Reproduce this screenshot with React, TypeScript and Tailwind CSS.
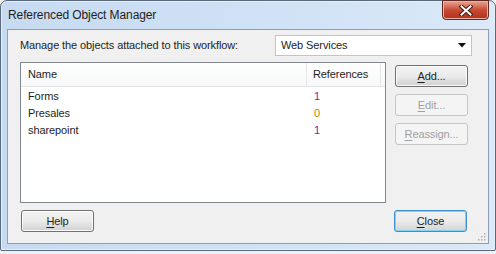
import React from "react";

function Btn({ mnemonic, rest, disabled, focused, className = "" }: { mnemonic: string; rest: string; disabled?: boolean; focused?: boolean; className?: string }) {
  const base = disabled
    ? "border-[#c5c5c5] bg-[#f4f4f4] text-[#a0a0a0]"
    : focused
    ? "border-[#3c8fc8] bg-gradient-to-b from-[#f2f2f2] via-[#ebebeb] to-[#d4d4d4] text-[#1e1e1e] shadow-[inset_0_0_0_1px_#7fd4f5]"
    : "border-[#707070] bg-gradient-to-b from-[#f2f2f2] via-[#ebebeb] to-[#d0d0d0] text-[#1e1e1e] shadow-[inset_0_0_0_1px_#fcfcfc]";
  return (
    <div className={`flex h-[22px] w-[73px] items-center justify-center rounded-[3px] border ${base} ${className}`}>
      <span>
        <span className="underline underline-offset-2">{mnemonic}</span>
        {rest}
      </span>
    </div>
  );
}

const rows = [
  { name: "Forms", refs: "1", color: "text-[#9a139a]" },
  { name: "Presales", refs: "0", color: "text-[#b48600]" },
  { name: "sharepoint", refs: "1", color: "text-[#9a139a]" },
];

export default function App() {
  return (
    <div className="relative h-[254px] w-[496px] overflow-hidden bg-[#eef0f2] font-['Liberation_Sans',Arial,sans-serif]">
      <div className="h-[251px] w-[496px] rounded-t-[7px] rounded-b-[2px] border border-[#59687a] bg-gradient-to-r from-[#c6daf1] via-[#cfe1f5] to-[#dbe9f8] shadow-[inset_0_0_0_1px_#e6f0fb]">
        {/* Title bar */}
        <div className="flex h-[28px] items-start justify-between pl-[7px] pr-[6px]">
          <span className="mt-[8px] text-[12px] leading-none tracking-[-0.1px] text-[#1e1e1e]">Referenced Object Manager</span>
          <div className="-mt-[1px] flex h-[20px] w-[47px] items-center justify-center rounded-b-[4px] border border-[#5e2a24] bg-gradient-to-b from-[#e8a493] via-[#c94a33] to-[#b0301c] shadow-[inset_0_0_0_1px_#eab2a4]">
            <svg width="14" height="11" viewBox="0 0 14 11">
              <path d="M2.5 1.5 L11.5 9.5 M11.5 1.5 L2.5 9.5" stroke="#3b1b16" strokeWidth="4" strokeLinecap="square" />
              <path d="M2.5 1.5 L11.5 9.5 M11.5 1.5 L2.5 9.5" stroke="#ffffff" strokeWidth="2" strokeLinecap="square" />
            </svg>
          </div>
        </div>

        {/* Client area */}
        <div className="relative mx-[6px] h-[215px] border border-[#8e9fb3] bg-[#f0f0f0] pl-[12px] pt-[5px] text-[11px] tracking-[-0.1px] text-[#1e1e1e]">
          <div className="flex h-[21px] items-center">
            <span className="w-[255px]">Manage the objects attached to this workflow:</span>
            <div className="flex h-[21px] w-[197px] items-center justify-between border border-[#c4c4c4] bg-white pl-[5px] pr-[5px]">
              <span>Web Services</span>
              <svg width="8" height="5" viewBox="0 0 8 5">
                <path d="M0 0 H8 L4 4.5 Z" fill="#111" />
              </svg>
            </div>
          </div>

          <div className="mt-[6px] flex">
            <div className="h-[141px] w-[366px] border border-[#828790] bg-white">
              <div className="flex h-[24px] border-b border-[#e5e5e5] bg-gradient-to-b from-white to-[#f7f8f9]">
                <div className="flex w-[286px] items-center border-r border-[#e5e5e5] pl-[7px]">Name</div>
                <div className="flex w-[74px] items-center border-r border-[#e5e5e5] pl-[6px]">References</div>
              </div>
              <div className="pt-[1px]">
                {rows.map((r) => (
                  <div key={r.name} className="flex h-[17px] items-center">
                    <div className="w-[286px] pl-[7px]">{r.name}</div>
                    <div className={`pl-[7px] ${r.color}`}>{r.refs}</div>
                  </div>
                ))}
              </div>
            </div>
            <div className="ml-[9px] mt-[3px] flex flex-col gap-[7px]">
              <Btn mnemonic="A" rest="dd..." />
              <Btn mnemonic="E" rest="dit..." disabled />
              <Btn mnemonic="R" rest="eassign..." disabled />
            </div>
          </div>

          <div className="mt-[7px] flex">
            <Btn mnemonic="H" rest="elp" className="ml-[1px]" />
            <Btn mnemonic="C" rest="lose" focused className="ml-[300px]" />
          </div>

          <svg className="absolute bottom-[2px] right-[2px]" width="8" height="8" viewBox="0 0 8 8">
            {[[6, 0], [6, 3], [3, 3], [6, 6], [3, 6], [0, 6]].map(([x, y]) => (
              <rect key={`${x}-${y}`} x={x} y={y} width="1.5" height="1.5" fill="#b0b0b0" />
            ))}
          </svg>
        </div>
      </div>
    </div>
  );
}
